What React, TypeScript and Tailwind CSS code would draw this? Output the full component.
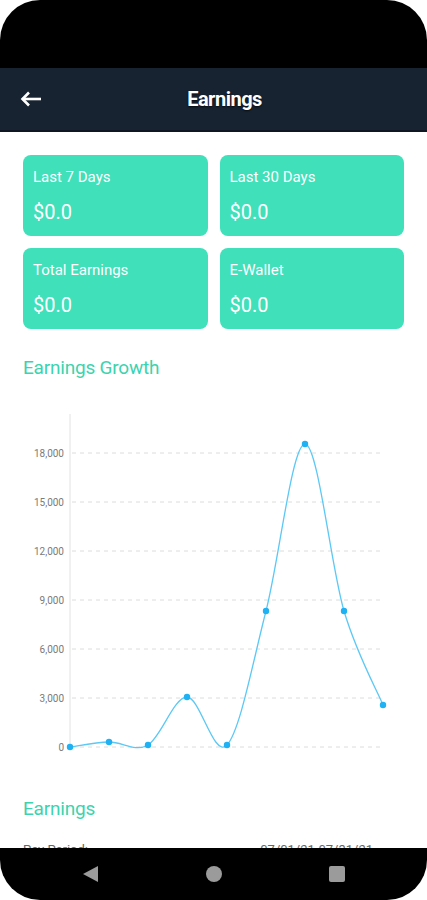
import React from 'react';

const cards = [
  { label: 'Last 7 Days', value: '$0.0' },
  { label: 'Last 30 Days', value: '$0.0' },
  { label: 'Total Earnings', value: '$0.0' },
  { label: 'E-Wallet', value: '$0.0' },
];

// chart points in svg coordinates
const points: [number, number][] = [
  [70, 356],
  [109, 351],
  [148, 354],
  [187, 306],
  [227, 354],
  [266, 220],
  [305, 53],
  [344, 220],
  [383, 314],
];

const ticks = [
  { label: '18,000', y: 62 },
  { label: '15,000', y: 111 },
  { label: '12,000', y: 160 },
  { label: '9,000', y: 209 },
  { label: '6,000', y: 258 },
  { label: '3,000', y: 307 },
  { label: '0', y: 356 },
];

function smoothPath(pts: [number, number][]) {
  let d = `M${pts[0][0]},${pts[0][1]}`;
  for (let i = 0; i < pts.length - 1; i++) {
    const p0 = pts[i - 1] || pts[i];
    const p1 = pts[i];
    const p2 = pts[i + 1];
    const p3 = pts[i + 2] || p2;
    const c1x = p1[0] + (p2[0] - p0[0]) / 6;
    const c1y = p1[1] + (p2[1] - p0[1]) / 6;
    const c2x = p2[0] - (p3[0] - p1[0]) / 6;
    const c2y = p2[1] - (p3[1] - p1[1]) / 6;
    d += ` C${c1x},${c1y} ${c2x},${c2y} ${p2[0]},${p2[1]}`;
  }
  return d;
}

function GrowthChart() {
  return (
    <svg width="427" height="390" className="block">
      <line x1="70" y1="23" x2="70" y2="356" stroke="#e2e2e2" strokeWidth="1" />
      {ticks.map((t) => (
        <g key={t.label}>
          <line x1="72" y1={t.y} x2="384" y2={t.y} stroke="#dcdcdc" strokeWidth="1" strokeDasharray="4 4" />
          <text
            x="64"
            y={t.y + 3.5}
            textAnchor="end"
            fontSize="10"
            fill="#7a7a7a"
            fontFamily="Roboto, sans-serif"
          >
            {t.label}
          </text>
        </g>
      ))}
      <path d={smoothPath(points)} fill="none" stroke="#5cc8f5" strokeWidth="1.3" />
      {points.map(([x, y], i) => (
        <circle key={i} cx={x} cy={y} r="3.2" fill="#1eb1f3" />
      ))}
    </svg>
  );
}

export default function App() {
  return (
    <div className="w-[427px] h-[900px] bg-white flex flex-col overflow-hidden font-['Roboto',sans-serif]">
      <div className="h-[68px] bg-black rounded-t-[40px] shrink-0" />

      <div className="h-[64px] shrink-0 bg-[#172331] border-b-2 border-[#0f1822] flex items-center pl-[20px] pr-[20px]">
        <svg width="22" height="16" viewBox="0 0 22 16" fill="none">
          <path d="M21 8H2.5" stroke="white" strokeWidth="2.6" />
          <path d="M9 1.5L2.5 8L9 14.5" stroke="white" strokeWidth="2.6" />
        </svg>
        <h1 className="flex-1 text-center text-white text-[20px] font-bold tracking-[-0.5px] [text-shadow:0_1px_2px_rgba(0,0,0,0.7)]">
          Earnings
        </h1>
      </div>

      <div className="flex-1 overflow-hidden">
        <div className="grid grid-cols-2 gap-x-[12px] gap-y-[12px] px-[23px] pt-[23px]">
          {cards.map((c) => (
            <div key={c.label} className="h-[81px] rounded-[8px] bg-[#3fe0ba] px-[10px] pt-[13px]">
              <p className="text-white text-[15px] leading-[18px]">{c.label}</p>
              <p className="text-white text-[20px] leading-[22px] mt-[15px]">{c.value}</p>
            </div>
          ))}
        </div>

        <h2 className="px-[23px] mt-[28px] text-[19px] leading-[22px] text-[#3dd3ae] tracking-[-0.2px]">
          Earnings Growth
        </h2>

        <div className="mt-[12px]">
          <GrowthChart />
        </div>

        <h2 className="px-[23px] mt-[17px] text-[19px] leading-[22px] text-[#3dd3ae] tracking-[-0.2px]">
          Earnings
        </h2>

        <div className="flex justify-between px-[23px] mt-[22px] text-[13px] leading-[16px] text-[#666]">
          <span>Pay Period:</span>
          <span className="mr-[31px]">07/01/21-07/31/21</span>
        </div>
      </div>

      <div className="h-[52px] shrink-0 bg-black rounded-b-[40px] flex items-center justify-center gap-[107px]">
        <svg width="17" height="18" viewBox="0 0 17 18">
          <path d="M16 1V17L1 9Z" fill="#9b9b9b" />
        </svg>
        <div className="w-[16px] h-[16px] rounded-full bg-[#9b9b9b]" />
        <div className="w-[16px] h-[16px] rounded-[2px] bg-[#9b9b9b]" />
      </div>
    </div>
  );
}
